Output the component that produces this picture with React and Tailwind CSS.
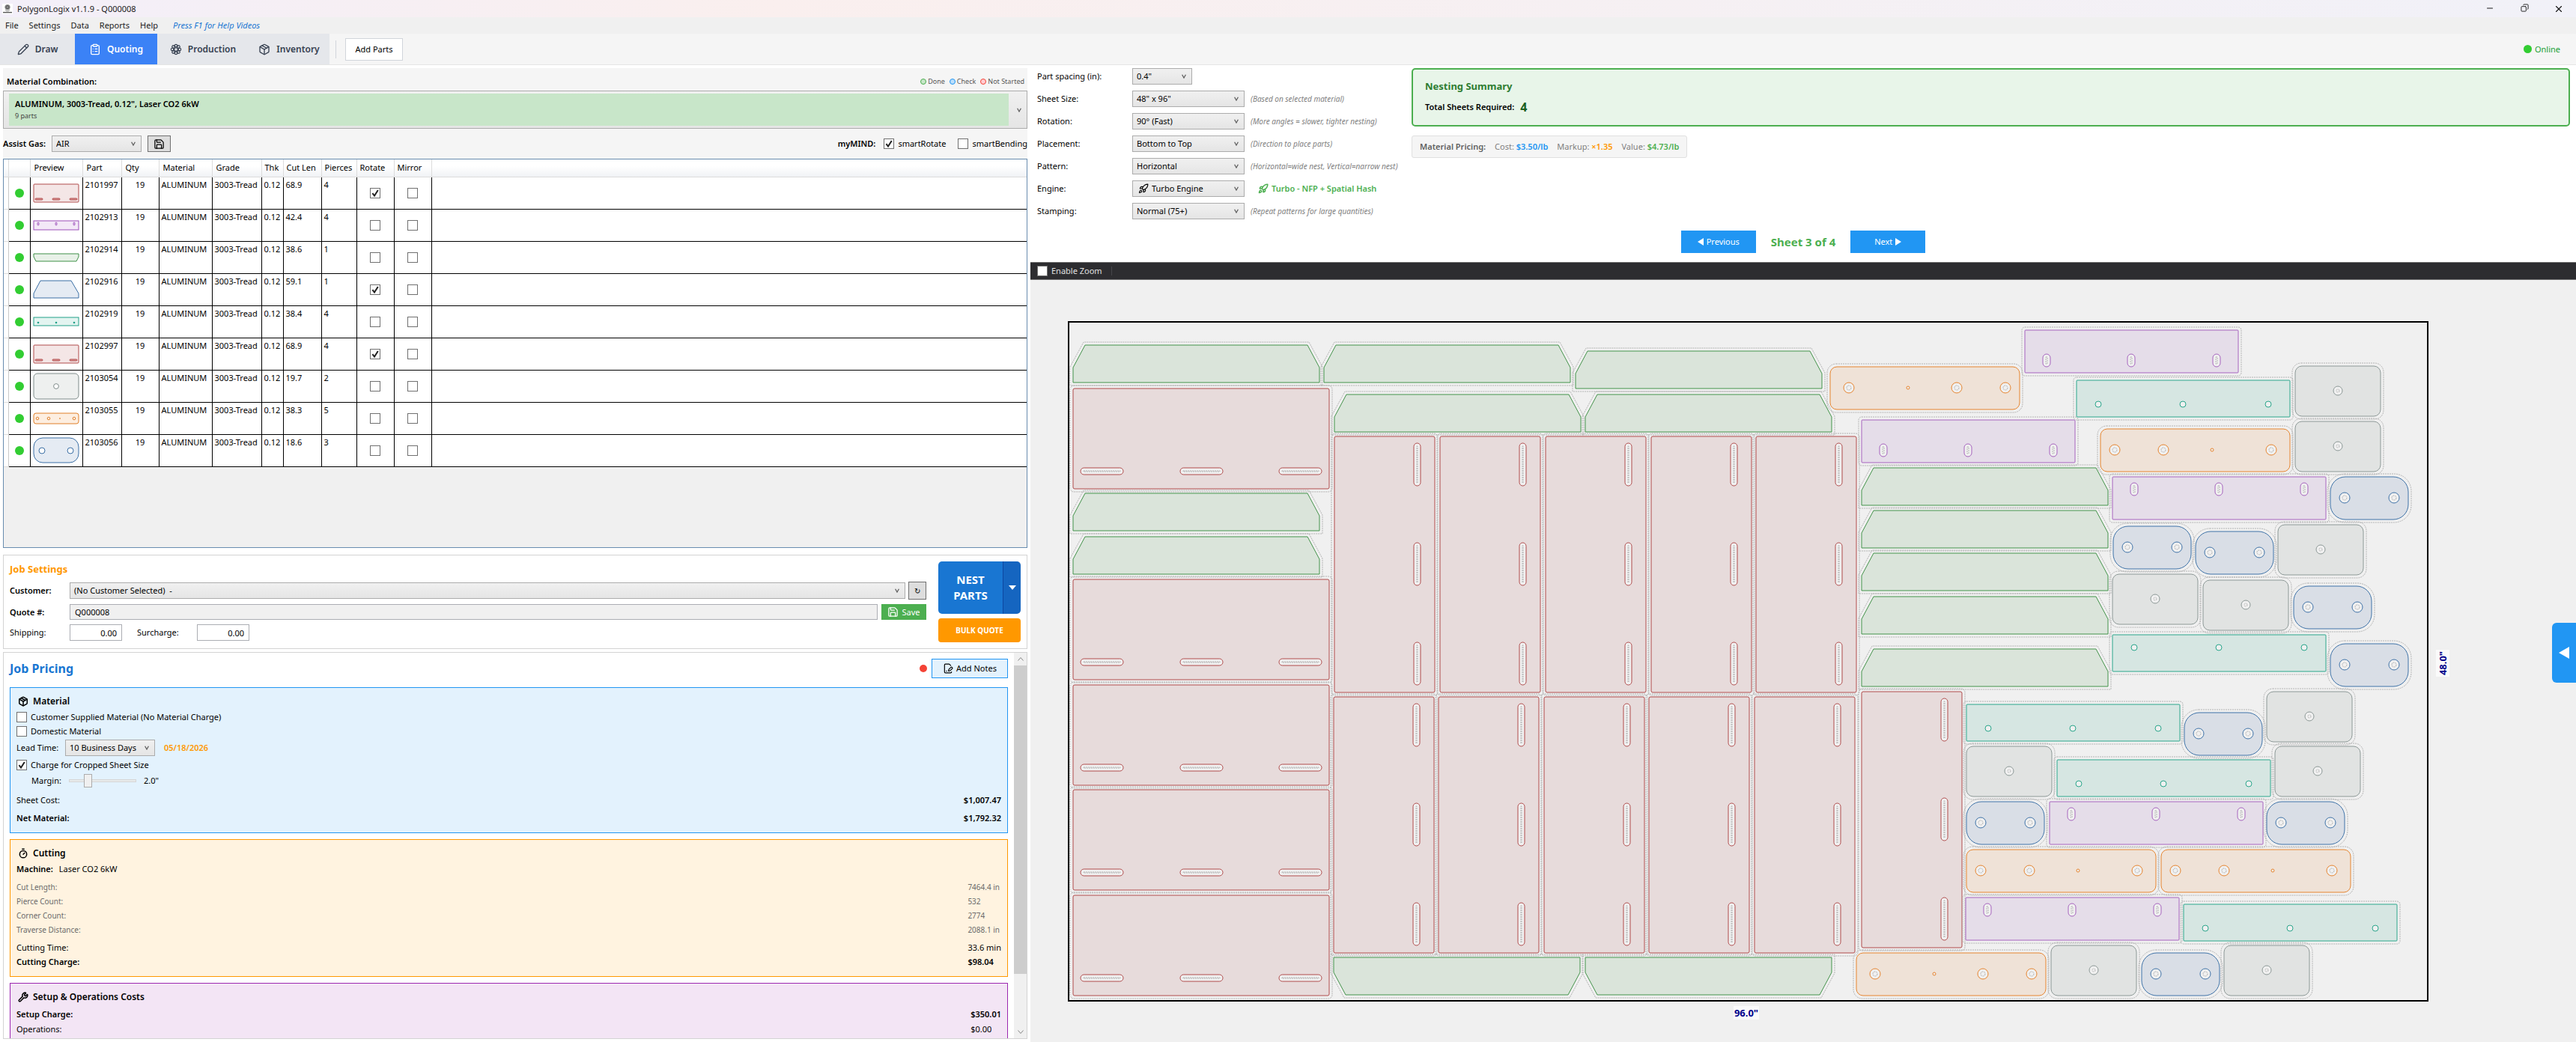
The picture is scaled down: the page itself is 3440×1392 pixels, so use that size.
import React, { useState } from 'react';
import {
  Pencil, ClipboardList, Package, Save, Timer, Wrench, Rocket, FilePenLine, Minus, Copy, X,
} from 'lucide-react';

const PARTS = [
  { id: '2101997', len: '68.9', pierces: 4, shape: 'panel', rotate: true },
  { id: '2102913', len: '42.4', pierces: 4, shape: 'slotBar' },
  { id: '2102914', len: '38.6', pierces: 1, shape: 'tray' },
  { id: '2102916', len: '59.1', pierces: 1, shape: 'hood', rotate: true },
  { id: '2102919', len: '38.4', pierces: 4, shape: 'holeBar' },
  { id: '2102997', len: '68.9', pierces: 4, shape: 'panel', rotate: true },
  { id: '2103054', len: '19.7', pierces: 2, shape: 'plate' },
  { id: '2103055', len: '38.3', pierces: 5, shape: 'strap' },
  { id: '2103056', len: '18.6', pierces: 3, shape: 'link' },
];

// Each shape is described at sheet scale: size, corner radius, holes [cx, cy, r] and slots [x, y, w, h]
const SHAPES = {
  panel: { w: 342, h: 134, r: 2, fill: '#e7dbdb', stroke: '#b04a4a', slots: [[10, 106, 57, 9], [143, 106, 57, 9], [275, 106, 57, 9]] },
  panelTurned: { w: 134, h: 342, r: 2, fill: '#e7dbdb', stroke: '#b04a4a', slots: [[106, 9, 9, 57], [106, 142, 9, 57], [106, 275, 9, 57]] },
  slotLow: { w: 285, h: 57, r: 1, fill: '#e5dde9', stroke: '#a663be', slots: [[24, 32, 10, 17], [137, 32, 10, 17], [251, 32, 10, 17]] },
  slotHigh: { w: 285, h: 57, r: 1, fill: '#e5dde9', stroke: '#a663be', slots: [[24, 8, 10, 17], [137, 8, 10, 17], [251, 8, 10, 17]] },
  holeLow: { w: 285, h: 49, r: 1, fill: '#d6e6e2', stroke: '#2aa68b', holes: [[29, 32, 4], [142, 32, 4], [256, 32, 4]] },
  holeHigh: { w: 285, h: 49, r: 1, fill: '#d6e6e2', stroke: '#2aa68b', holes: [[29, 17, 4], [142, 17, 4], [256, 17, 4]] },
  strapA: { w: 253, h: 57, r: 9, fill: '#efe2d7', stroke: '#e6842e', holes: [[25, 28, 7], [104, 28, 2], [169, 28, 7], [234, 28, 7]] },
  strapB: { w: 253, h: 57, r: 9, fill: '#efe2d7', stroke: '#e6842e', holes: [[19, 28, 7], [84, 28, 7], [149, 28, 2], [228, 28, 7]] },
  plate: { w: 114, h: 67, r: 9, fill: '#e1e3e2', stroke: '#8c9896', holes: [[57, 33, 6]] },
  link: { w: 104, h: 57, r: 20, fill: '#d9dee6', stroke: '#3f73a8', holes: [[19, 28, 7], [85, 28, 7]] },
  trayUp: { fill: '#dae4da', stroke: '#43934a', points: '0,30 16,0 313,0 329,30 329,50 0,50', outer: '-4,29 14,-4 315,-4 333,29 333,54 -4,54' },
  trayDown: { fill: '#dae4da', stroke: '#43934a', points: '0,0 329,0 329,20 313,50 16,50 0,20', outer: '-4,-4 333,-4 333,21 315,54 14,54 -4,21' },
};

const NEST = {
  panel: [[6, 89], [6, 344], [6, 485], [6, 625], [6, 766]],
  panelTurned: [
    [355, 153], [496, 153], [637, 153], [778, 153], [918, 153],
    [354, 501], [494, 501], [635, 501], [775, 501], [916, 501], [1059, 494],
  ],
  trayUp: [
    [6, 31], [341, 31], [677, 39], [355, 97], [690, 97], [6, 229], [6, 287],
    [1059, 195], [1059, 252], [1059, 309], [1059, 367], [1059, 437],
  ],
  trayDown: [[354, 849], [690, 849]],
  slotLow: [[1277, 11], [1059, 131]],
  slotHigh: [[1394, 207], [1310, 641], [1198, 769]],
  holeLow: [[1346, 78], [1199, 511], [1320, 585], [1489, 778]],
  holeHigh: [[1394, 418]],
  strapA: [[1017, 60], [1052, 843]],
  strapB: [[1378, 143], [1199, 705], [1459, 705]],
  plate: [
    [1638, 59], [1638, 133], [1615, 271], [1394, 337], [1515, 345],
    [1600, 494], [1199, 567], [1611, 567], [1312, 833], [1543, 833],
  ],
  link: [
    [1685, 207], [1395, 273], [1505, 280], [1636, 353], [1685, 430],
    [1490, 522], [1199, 641], [1600, 641], [1433, 843],
  ],
};

const NEST_OPTIONS = [
  { id: 'spacing', label: 'Part spacing (in):', value: '0.4"', narrow: true },
  { id: 'sheet', label: 'Sheet Size:', value: '48" x 96"', hint: '(Based on selected material)' },
  { id: 'rotation', label: 'Rotation:', value: '90° (Fast)', hint: '(More angles = slower, tighter nesting)' },
  { id: 'placement', label: 'Placement:', value: 'Bottom to Top', hint: '(Direction to place parts)' },
  { id: 'pattern', label: 'Pattern:', value: 'Horizontal', hint: '(Horizontal=wide nest, Vertical=narrow nest)' },
  { id: 'engine', label: 'Engine:', value: 'Turbo Engine', engine: 'Turbo - NFP + Spatial Hash' },
  { id: 'stamping', label: 'Stamping:', value: 'Normal (75+)', hint: '(Repeat patterns for large quantities)' },
];

function Chevron() {
  return (
    <svg viewBox="0 0 6 6" className="pointer-events-none absolute right-[7px] top-1/2 h-[6px] w-[6px] -translate-y-1/2">
      <path d="M0.6 0.8 L3 5 L5.4 0.8" fill="none" stroke="#606060" strokeWidth="1.3" />
    </svg>
  );
}

function Combo({ id, options, className = '', icon }) {
  return (
    <div className={`relative h-[22px] border border-[#acacac] bg-linear-to-b from-[#f0f0f0] to-[#e5e5e5] ${className}`}>
      {icon}
      <select id={id} className={`block h-full w-full appearance-none bg-transparent pr-4 outline-none ${icon ? 'pl-[25px]' : 'pl-[5px]'}`}>
        {options.map((o) => <option key={o}>{o}</option>)}
      </select>
      <Chevron />
    </div>
  );
}

function Check({ id, checked = false, label }) {
  return (
    <span className="relative block h-[14px] w-[14px] shrink-0">
      <input
        id={id}
        type="checkbox"
        aria-label={label}
        defaultChecked={checked}
        className="peer block h-[14px] w-[14px] appearance-none border border-[#707070] bg-white"
      />
      <svg viewBox="0 0 14 14" className="pointer-events-none absolute inset-0 hidden peer-checked:block">
        <path d="M3.4 7.2 L6 10.6 L10.8 3" fill="none" stroke="#212121" strokeWidth="2" />
      </svg>
    </span>
  );
}

function FlowerGear({ className }) {
  return (
    <svg viewBox="0 0 24 24" className={className} fill="none" stroke="currentColor" strokeWidth="1.8">
      <circle cx="12" cy="12" r="3.4" />
      {[0, 45, 90, 135, 180, 225, 270, 315].map((a) => (
        <circle key={a} cx="12" cy="4.6" r="2.6" transform={`rotate(${a} 12 12)`} />
      ))}
    </svg>
  );
}

function TitleBar() {
  return (
    <header className="flex h-[23px] items-center bg-linear-to-r from-[#f3eff9] via-[#faefee] via-30% to-[#f1f1f8] pl-[3px] text-[#1a1a1a]">
      <svg viewBox="0 0 14 14" className="h-[14px] w-[14px] bg-white" aria-hidden="true">
        <circle cx="7" cy="4.6" r="3.6" fill="#8a8a8a" />
        <circle cx="7" cy="4.6" r="2" fill="none" stroke="#4c4c4c" strokeWidth="0.8" />
        <path d="M4.4 8 L5.4 9.6 H8.6 L9.6 8" fill="none" stroke="#777" strokeWidth="0.8" />
        <path d="M1 11.6 H13" stroke="#555" strokeWidth="1.4" />
      </svg>
      <h1 className="ml-1.5">PolygonLogix v1.1.9 - Q000008</h1>
      <div className="ml-auto flex">
        <button aria-label="Minimize" className="flex w-[46px] justify-center"><Minus className="h-3 w-3" strokeWidth={2} /></button>
        <button aria-label="Restore" className="flex w-[46px] justify-center"><Copy className="h-[11px] w-[11px] -scale-x-100" strokeWidth={2} /></button>
        <button aria-label="Close" className="flex w-[46px] justify-center"><X className="h-[14px] w-[14px]" strokeWidth={2} /></button>
      </div>
    </header>
  );
}

function MenuBar() {
  return (
    <nav className="flex h-[22px] items-center gap-[14px] bg-[#f0f0f0] pl-[7px] text-[#212121]">
      {['File', 'Settings', 'Data', 'Reports', 'Help'].map((m) => <button key={m}>{m}</button>)}
      <a href="#help" className="ml-1.5 italic text-[#1976d2]">Press F1 for Help Videos</a>
    </nav>
  );
}

function Toolbar() {
  const [tab, setTab] = useState('Quoting');
  const tabs = [
    { name: 'Draw', icon: Pencil, width: 'w-[100px]' },
    { name: 'Quoting', icon: ClipboardList, width: 'w-[110px]' },
    { name: 'Production', icon: FlowerGear, width: 'w-[122px]' },
    { name: 'Inventory', icon: Package, width: 'w-[108px]' },
  ];
  return (
    <div className="flex h-[42px] items-center border-b border-[#e5e5e5] bg-[#f5f5f5]">
      <div className="flex h-full bg-[#e5e7eb]">
        {tabs.map(({ name, icon: Icon, width }) => (
          <button
            key={name}
            onClick={() => setTab(name)}
            className={`flex h-full items-center justify-center gap-2 text-[12px] font-semibold ${width} ${
              tab === name ? 'bg-[#3b82f6] text-white' : 'text-[#374151]'
            }`}
          >
            <Icon className="h-4 w-4" />
            {name}
          </button>
        ))}
      </div>
      <div className="ml-2 h-6 w-px bg-[#d1d5db]" />
      <button className="ml-3 h-[30px] w-[77px] border border-[#d1d5db] bg-white text-black">Add Parts</button>
      <div className="ml-auto mr-[21px] flex items-center gap-1 text-[#22a035]">
        <span className="h-[11px] w-[11px] rounded-full bg-[#32cd32]" />
        Online
      </div>
    </div>
  );
}

function MaterialPicker() {
  const legend = [
    ['Done', 'border-[#4caf50] bg-[#c8e6c9]'],
    ['Check', 'border-[#2196f3] bg-[#bbdefb]'],
    ['Not Started', 'border-[#f44336] bg-[#ffcdd2]'],
  ];
  return (
    <section className="bg-[#f5f5f5] pb-2">
      <div className="flex items-center justify-between pb-1 pl-[5px] pr-1 pt-2.5 leading-4">
        <label htmlFor="material" className="font-semibold">Material Combination:</label>
        <div className="flex gap-1.5 text-[9px] text-[#555]">
          {legend.map(([name, dot]) => (
            <span key={name} className="flex items-center gap-0.5">
              <i className={`h-2 w-2 rounded-full border ${dot}`} />
              {name}
            </span>
          ))}
        </div>
      </div>
      <div className="relative h-[51px] border border-[#acacac] bg-linear-to-b from-[#f0f0f0] to-[#e5e5e5] pb-[3px] pl-[7px] pr-6 pt-[3px]">
        <div className="flex h-full flex-col justify-center bg-[#c8e6c9] pl-2">
          <strong className="text-[11px] font-semibold leading-4 text-black">ALUMINUM, 3003-Tread, 0.12", Laser CO2 6kW</strong>
          <span className="text-[9px] leading-4 text-[#444]">9 parts</span>
        </div>
        <Chevron />
        <select id="material" className="absolute inset-0 h-full w-full appearance-none opacity-0">
          <option>ALUMINUM, 3003-Tread</option>
        </select>
      </div>
      <div className="mt-2 flex h-6 items-center">
        <label htmlFor="gas" className="w-[65px] font-semibold">Assist Gas:</label>
        <Combo id="gas" options={['AIR', 'N2', 'O2']} className="h-6 w-[120px]" />
        <button aria-label="Save gas" className="ml-2 flex h-[22px] w-[31px] items-center justify-center border border-[#707070] bg-[#ddd]">
          <Save className="h-[15px] w-[15px]" strokeWidth={2} />
        </button>
        <span className="ml-auto font-semibold">myMIND:</span>
        <label className="ml-[11px] flex items-center gap-[5px]"><Check checked />smartRotate</label>
        <label className="ml-4 flex items-center gap-[5px]"><Check />smartBending</label>
      </div>
    </section>
  );
}

function Thumb({ shape }) {
  const art = {
    panel: (
      <g fill="#f4e6e6" stroke="#b04a4a">
        <rect x="1" y="6" width="60" height="24" rx="1" />
        <g fill="#e0a3a3"><rect x="3" y="25" width="10" height="2" rx="1" /><rect x="26" y="25" width="10" height="2" rx="1" /><rect x="49" y="25" width="10" height="2" rx="1" /></g>
      </g>
    ),
    slotBar: (
      <g fill="#f3e8f7" stroke="#9b4fb8">
        <rect x="1" y="12" width="60" height="12" />
        <g fill="#e0c2ea" strokeWidth="0.8"><rect x="6" y="14" width="2" height="4" rx="1" /><rect x="30" y="14" width="2" height="4" rx="1" /><rect x="54" y="14" width="2" height="4" rx="1" /></g>
      </g>
    ),
    tray: <path d="M1 13 H61 V17 L58 23 H4 L1 17 Z" fill="#e8f1e8" stroke="#3f9148" />,
    hood: <path d="M10 6 H51 L61 23 V29 H1 V23 Z" fill="#e5ebf3" stroke="#3b6fa5" />,
    holeBar: (
      <g fill="#e3f4f0" stroke="#20a088">
        <rect x="1" y="12" width="60" height="11" />
        <g fill="#20a088" stroke="none"><circle cx="7" cy="19" r="1.3" /><circle cx="31" cy="19" r="1.3" /><circle cx="55" cy="19" r="1.3" /></g>
      </g>
    ),
    plate: (
      <g fill="#eef0ef" stroke="#7f8c8a">
        <rect x="1" y="1" width="60" height="34" rx="5" />
        <circle cx="31" cy="18" r="3.4" fill="#fff" />
      </g>
    ),
    strap: (
      <g fill="#fdeee0" stroke="#e07f28">
        <rect x="1" y="11" width="60" height="14" rx="3" />
        <g fill="#fff"><circle cx="6" cy="18" r="1.8" /><circle cx="21" cy="18" r="1.8" /><circle cx="36" cy="18" r="0.5" /><circle cx="55" cy="18" r="1.8" /></g>
      </g>
    ),
    link: (
      <g fill="#e5ebf3" stroke="#3b6fa5">
        <rect x="1" y="1" width="60" height="33" rx="12" />
        <circle cx="12" cy="18" r="4" fill="#fff" /><circle cx="50" cy="18" r="4" fill="#fff" />
      </g>
    ),
  };
  return <svg viewBox="0 0 62 36" className="mx-auto block h-9 w-[62px]">{art[shape]}</svg>;
}

function PartsTable() {
  return (
    <section className="h-[520px] shrink-0 border border-[#688caf] bg-[#f0f0f0]">
      <table className="w-full table-fixed border-collapse bg-white text-left">
        <colgroup>
          <col className="w-[6px]" /><col className="w-[29px]" /><col className="w-[70px]" /><col className="w-[52px]" />
          <col className="w-[50px]" /><col className="w-[71px]" /><col className="w-[66px]" /><col className="w-[29px]" />
          <col className="w-[51px]" /><col className="w-[47px]" /><col className="w-[50px]" /><col className="w-[50px]" /><col />
        </colgroup>
        <thead>
          <tr className="h-[23px] bg-linear-to-b from-white from-40% to-[#f0f2f5]">
            {['', '', 'Preview', 'Part', 'Qty', 'Material', 'Grade', 'Thk', 'Cut Len', 'Pierces', 'Rotate', 'Mirror', ''].map((h, i) => (
              <th key={i} className="overflow-hidden whitespace-nowrap border-b border-r border-[#dcdcdc] pl-[5px] text-[11px] font-normal last:border-r-0 nth-[n+8]:pl-[4px] nth-[n+11]:pl-[7px]">
                {h}
              </th>
            ))}
          </tr>
        </thead>
        <tbody>
          {PARTS.map((p) => (
            <tr key={p.id} className="h-[43px] align-top *:whitespace-nowrap *:border-b *:border-r *:border-black *:pl-[3px] *:pt-0.5 *:last:border-r-0">
              <td className="border-b-[#dcdcdc]! border-r-[#c8c8c8]!" />
              <td className="p-0! align-middle"><span className="mx-auto block h-3 w-3 rounded-full bg-[#32cd32]" /></td>
              <td className="p-0! align-middle"><Thumb shape={p.shape} /></td>
              <td>{p.id}</td>
              <td className="p-0! pt-0.5! text-center">19</td>
              <td>ALUMINUM</td>
              <td>3003-Tread</td>
              <td>0.12</td>
              <td>{p.len}</td>
              <td>{p.pierces}</td>
              <td className="p-0! align-middle"><div className="flex justify-center"><Check checked={p.rotate} label={`Rotate ${p.id}`} /></div></td>
              <td className="p-0! align-middle"><div className="flex justify-center"><Check label={`Mirror ${p.id}`} /></div></td>
              <td />
            </tr>
          ))}
        </tbody>
      </table>
    </section>
  );
}

function JobSettings() {
  const money = 'h-[22px] w-[70px] border border-[#abadb3] bg-white pr-1.5 text-right outline-none';
  return (
    <section className="mt-[9px] flex gap-4 border border-[#d3d3d3] bg-white p-2">
      <div className="flex flex-1 flex-col gap-1.5">
        <h2 className="h-[21px] text-[13px] font-bold leading-5 text-[#ff9800]">Job Settings</h2>
        <div className="flex items-center">
          <label htmlFor="customer" className="w-20 font-semibold">Customer:</label>
          <Combo id="customer" options={['(No Customer Selected)\u00a0 -']} className="h-6 flex-1" />
          <button aria-label="Refresh customers" className="ml-1 h-6 w-6 border border-[#707070] bg-[#ddd] text-[10px]">↻</button>
        </div>
        <div className="flex items-center">
          <label htmlFor="quote" className="w-20 font-semibold">Quote #:</label>
          <input id="quote" readOnly defaultValue="Q000008" className="h-[21px] flex-1 border border-[#abadb3] bg-[#f0f0f0] pl-1.5 outline-none" />
          <button className="ml-[5px] flex h-[21px] w-[60px] items-center justify-center gap-1 bg-[#4caf50] text-white">
            <Save className="h-[15px] w-[15px]" />Save
          </button>
        </div>
        <div className="flex items-center">
          <label htmlFor="shipping" className="w-20">Shipping:</label>
          <input id="shipping" defaultValue="0.00" className={money} />
          <label htmlFor="surcharge" className="ml-5 w-20">Surcharge:</label>
          <input id="surcharge" defaultValue="0.00" className={money} />
        </div>
      </div>
      <div className="flex w-[110px] flex-col gap-1.5 font-bold text-white">
        <div className="flex h-[70px] overflow-hidden rounded-[5px]">
          <button className="flex-1 bg-[#1976d2] text-[15px] leading-[21px]">NEST<br />PARTS</button>
          <button aria-label="Nest options" className="flex w-6 items-center justify-center border-l border-[#0d47a1] bg-[#1565c0]">
            <svg viewBox="0 0 10 6" className="h-[6px] w-[10px]"><path d="M0 0 H10 L5 6 Z" fill="#fff" /></svg>
          </button>
        </div>
        <button className="h-8 rounded-[4px] bg-[#ff9800] text-[10px]">BULK QUOTE</button>
      </div>
    </section>
  );
}

function CostCard({ title, icon: Icon, tone, children }) {
  return (
    <section className={`border px-2 pb-2 pt-2 ${tone}`}>
      <h3 className="flex h-5 items-center gap-1.5 text-[12px] font-semibold text-black">
        <Icon className="ml-0.5 h-[14px] w-[14px]" strokeWidth={2.6} />
        {title}
      </h3>
      {children}
    </section>
  );
}

function JobPricing() {
  return (
    <section className="mt-1 flex min-h-0 flex-1 border border-[#d3d3d3] bg-white">
      <div className="min-h-0 flex-1 overflow-hidden px-2 pt-2">
        <div className="flex h-[26px] items-center">
          <h2 className="text-[16px] font-bold text-[#1976d2]">Job Pricing</h2>
          <span className="ml-auto h-2.5 w-2.5 rounded-full bg-[#f44336]" />
          <button className="ml-1.5 flex h-[26px] w-[102px] items-center justify-center gap-1 border border-[#2196f3] bg-[#e3f2fd]">
            <FilePenLine className="h-[14px] w-[14px]" />Add Notes
          </button>
        </div>
        <div className="mt-3 flex flex-col gap-2">
          <CostCard title="Material" icon={Package} tone="border-[#2196f3] bg-[#e3f2fd]">
            <label className="mt-px flex h-[19px] items-center gap-[5px]"><Check />Customer Supplied Material (No Material Charge)</label>
            <label className="flex h-[19px] items-center gap-[5px]"><Check />Domestic Material</label>
            <div className="mt-0.5 flex items-center">
              <label htmlFor="lead" className="w-[65px]">Lead Time:</label>
              <Combo id="lead" options={['10 Business Days']} className="w-[120px]" />
              <span className="ml-3 font-semibold text-[#ff9800]">05/18/2026</span>
            </div>
            <label className="mt-0.5 flex h-[19px] items-center gap-[5px]"><Check checked />Charge for Cropped Sheet Size</label>
            <div className="ml-5 mt-[3px] flex h-[18px] items-center">
              <label htmlFor="margin" className="w-[50px]">Margin:</label>
              <input
                id="margin"
                type="range"
                min="0"
                max="8"
                defaultValue="2"
                className="h-[18px] w-[90px] appearance-none bg-transparent [&::-webkit-slider-runnable-track]:h-1 [&::-webkit-slider-runnable-track]:border [&::-webkit-slider-runnable-track]:border-[#d6d6d6] [&::-webkit-slider-runnable-track]:bg-[#e7eaea] [&::-webkit-slider-thumb]:-mt-2 [&::-webkit-slider-thumb]:h-[18px] [&::-webkit-slider-thumb]:w-[11px] [&::-webkit-slider-thumb]:appearance-none [&::-webkit-slider-thumb]:border [&::-webkit-slider-thumb]:border-[#acacac] [&::-webkit-slider-thumb]:bg-[#f0f0f0]"
              />
              <output className="ml-2.5">2.0"</output>
            </div>
            <dl className="mt-[7px] grid grid-cols-[1fr_auto] gap-y-1 pb-px leading-5">
              <dt>Sheet Cost:</dt><dd className="font-semibold">$1,007.47</dd>
              <dt className="font-semibold">Net Material:</dt><dd className="font-semibold">$1,792.32</dd>
            </dl>
          </CostCard>
          <CostCard title="Cutting" icon={Timer} tone="border-[#ff9800] bg-[#fff3e0]">
            <p className="mt-[3px] leading-4"><b className="mr-2 font-semibold">Machine:</b>Laser CO2 6kW</p>
            <dl className="mt-[7px] grid grid-cols-[1fr_auto] pb-0.5 leading-[19px]">
              {[['Cut Length:', '7464.4 in'], ['Pierce Count:', '532'], ['Corner Count:', '2774'], ['Traverse Distance:', '2088.1 in']].map(([k, v]) => (
                <React.Fragment key={k}>
                  <dt className="text-[10px] leading-[19px] text-[#6b6b6b]">{k}</dt>
                  <dd className="text-[10px] leading-[19px] text-[#6b6b6b]">{v}</dd>
                </React.Fragment>
              ))}
              <dt className="mt-1">Cutting Time:</dt><dd className="mt-1">33.6 min</dd>
              <dt className="font-semibold">Cutting Charge:</dt><dd className="font-semibold">$98.04</dd>
            </dl>
          </CostCard>
          <CostCard title="Setup & Operations Costs" icon={Wrench} tone="border-[#9c27b0] bg-[#f3e5f5]">
            <dl className="mt-[3px] grid grid-cols-[1fr_auto] leading-5">
              <dt className="font-semibold">Setup Charge:</dt><dd className="font-semibold">$350.01</dd>
              <dt>Operations:</dt><dd>$0.00</dd>
            </dl>
          </CostCard>
        </div>
      </div>
      <div className="flex w-[17px] flex-col items-center bg-[#f0f0f0]">
        <svg viewBox="0 0 8 5" className="my-[6px] h-[5px] w-2"><path d="M0.5 4.5 L4 0.5 L7.5 4.5" fill="none" stroke="#858585" /></svg>
        <div className="h-4/5 w-full bg-[#cdcdcd]" />
        <svg viewBox="0 0 8 5" className="mb-[6px] mt-auto h-[5px] w-2"><path d="M0.5 0.5 L4 4.5 L7.5 0.5" fill="none" stroke="#858585" /></svg>
      </div>
    </section>
  );
}

function NestSettings() {
  return (
    <section className="relative h-[263px] bg-white pl-[9px] pr-2 pt-1">
      <div className="flex">
        <div className="flex w-[500px] flex-col gap-2">
          {NEST_OPTIONS.map((o) => (
            <div key={o.id} className="flex h-[22px] items-center">
              <label htmlFor={o.id} className="w-[127px]">{o.label}</label>
              <Combo
                id={o.id}
                options={[o.value]}
                className={o.narrow ? 'w-20' : 'w-[150px]'}
                icon={o.engine && <Rocket className="absolute left-[7px] top-[3px] h-[14px] w-[14px]" strokeWidth={2} />}
              />
              {o.hint && <span className="ml-2 text-[10px] italic text-[#808080]">{o.hint}</span>}
              {o.engine && (
                <span className="ml-[18px] flex items-center gap-1 font-semibold text-[#4caf50]">
                  <Rocket className="h-[14px] w-[14px]" strokeWidth={2.6} />{o.engine}
                </span>
              )}
            </div>
          ))}
        </div>
        <div className="flex-1">
          <div className="h-[78px] rounded-[5px] border-2 border-[#4caf50] bg-[#e8f5e9] px-4 pt-3">
            <h2 className="text-[13px] font-bold leading-5 text-[#2e7d32]">Nesting Summary</h2>
            <p className="mt-2 flex items-center gap-2 font-semibold leading-5 text-black">
              Total Sheets Required: <b className="text-[16px] font-bold text-[#1b5e20]">4</b>
            </p>
          </div>
          <div className="mt-3 flex h-[30px] w-fit items-center gap-3 rounded-[3px] border border-[#e0e0e0] bg-[#f5f5f5] px-2.5 text-[#808080]">
            <strong className="font-semibold text-[#616161]">Material Pricing:</strong>
            <span>Cost: <b className="font-semibold text-[#2196f3]">$3.50/lb</b></span>
            <span>Markup: <b className="font-semibold text-[#ff9800]">×1.35</b></span>
            <span>Value: <b className="font-semibold text-[#4caf50]">$4.73/lb</b></span>
          </div>
        </div>
      </div>
      <div className="absolute inset-x-0 bottom-3 flex items-center justify-center gap-5 text-white">
        <button className="flex h-[30px] w-[100px] items-center justify-center gap-1 bg-[#2196f3]">
          <svg viewBox="0 0 8 10" className="h-[10px] w-2"><path d="M8 0 V10 L0 5 Z" fill="#fff" /></svg>Previous
        </button>
        <span className="text-[15px] font-bold text-[#4caf50]">Sheet 3 of 4</span>
        <button className="flex h-[30px] w-[100px] items-center justify-center gap-1 bg-[#2196f3]">
          Next<svg viewBox="0 0 8 10" className="h-[10px] w-2"><path d="M0 0 V10 L8 5 Z" fill="#fff" /></svg>
        </button>
      </div>
    </section>
  );
}

function NestedPart({ shape, x, y }) {
  const s = SHAPES[shape];
  const dash = { fill: 'none', stroke: '#b4b4b4', strokeDasharray: '2 1' };
  if (s.points) {
    return (
      <g transform={`translate(${x} ${y})`}>
        <polygon points={s.outer} {...dash} />
        <polygon points={s.points} fill={s.fill} stroke={s.stroke} />
      </g>
    );
  }
  return (
    <g transform={`translate(${x} ${y})`}>
      <rect x="-4" y="-4" width={s.w + 8} height={s.h + 8} rx={s.r + 3} {...dash} />
      <rect width={s.w} height={s.h} rx={s.r} fill={s.fill} stroke={s.stroke} />
      {(s.slots || []).map(([sx, sy, w, h]) => (
        <g key={`${sx}-${sy}`}>
          <rect x={sx} y={sy} width={w} height={h} rx={Math.min(w, h) / 2} fill="#f0f0f0" stroke={s.stroke} />
          <rect x={sx + 4} y={sy + 4} width={w - 8} height={h - 8} {...dash} />
        </g>
      ))}
      {(s.holes || []).map(([cx, cy, r]) => (
        <g key={cx}>
          <circle cx={cx} cy={cy} r={r} fill="#f0f0f0" stroke={s.stroke} />
          {r > 4 && <circle cx={cx} cy={cy} r={r - 4} {...dash} />}
        </g>
      ))}
    </g>
  );
}

function NestCanvas() {
  return (
    <section className="relative min-h-0 flex-1 overflow-hidden bg-[#f0f0f0]">
      <svg viewBox="-51 -56 2064 1018" className="block w-full" role="img" aria-label="Nested sheet layout">
        <rect width="1815" height="907" fill="none" stroke="#000" strokeWidth="2" />
        {Object.entries(NEST).map(([shape, spots]) => spots.map(([x, y]) => (
          <NestedPart key={`${shape}-${x}-${y}`} shape={shape} x={x} y={y} />
        )))}
        <g fill="#fafafa">
          <rect x="888" y="914" width="34" height="18" />
          <rect x="1826" y="438" width="18" height="36" />
        </g>
        <g fill="#00008b" fontSize="13" fontWeight="700" textAnchor="middle">
          <text x="905" y="928">96.0"</text>
          <text transform="translate(1840 456) rotate(-90)">48.0"</text>
        </g>
      </svg>
      <button aria-label="Expand panel" className="absolute right-0 top-[45%] flex h-20 w-8 items-center justify-center rounded-l-[6px] bg-[#2196f3]">
        <svg viewBox="0 0 14 16" className="h-4 w-[14px]"><path d="M14 0 V16 L0 8 Z" fill="#fff" /></svg>
      </button>
    </section>
  );
}

export default function App() {
  return (
    <div className="flex h-screen flex-col bg-white font-['Noto_Sans','Open_Sans',sans-serif] text-[11px] leading-4 text-black">
      <TitleBar />
      <MenuBar />
      <Toolbar />
      <main className="flex min-h-0 flex-1">
        <div className="flex w-2/5 flex-col px-1 pb-1 pt-1">
          <MaterialPicker />
          <PartsTable />
          <JobSettings />
          <JobPricing />
        </div>
        <div className="flex flex-1 flex-col">
          <NestSettings />
          <div className="flex h-6 items-center border-y border-[#707070] bg-[#2d2d30] pl-[9px] text-[#e0e0e0]">
            <label className="flex items-center gap-[5px]"><Check />Enable Zoom</label>
            <div className="ml-3 h-3 w-px bg-[#46464a]" />
          </div>
          <NestCanvas />
        </div>
      </main>
    </div>
  );
}
